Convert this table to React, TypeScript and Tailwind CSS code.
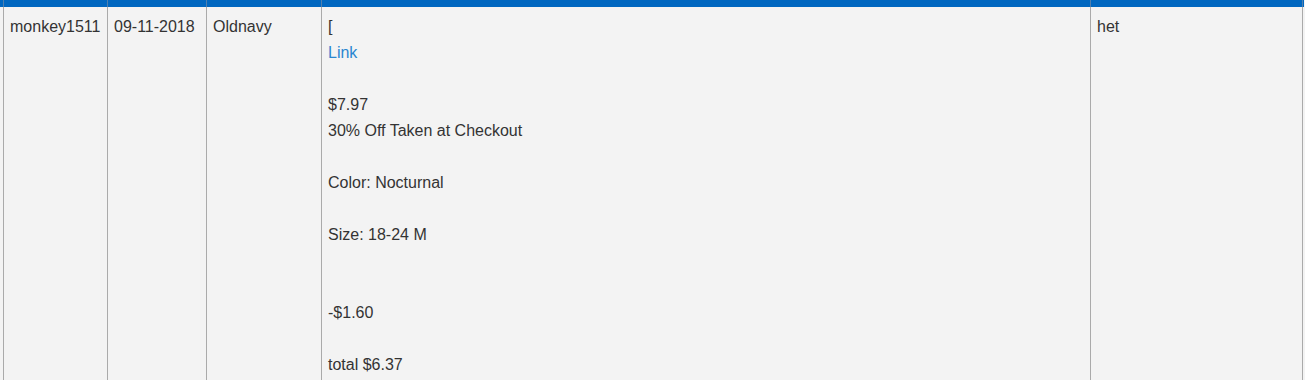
import React from 'react';

const cols = ['w-[104px]', 'w-[99px]', 'w-[115px]', 'w-[769px]', 'w-[213px]'];

export default function App() {
  return (
    <div
      className="w-[1305px] h-[380px] overflow-hidden bg-[#f3f3f3] text-[16px] leading-[26px] text-[#333]"
      style={{ fontFamily: '"Liberation Sans", Arial, sans-serif' }}
    >
      {/* Header strip */}
      <div className="flex h-[7px] w-[1304px] bg-[#0067c0] pl-[3px]">
        {cols.map((c, i) => (
          <div
            key={i}
            className={`${c} h-full border-l border-[#4f7fae] ${i === cols.length - 1 ? 'border-r' : ''}`}
          />
        ))}
      </div>

      {/* Order row */}
      <div className="flex pl-[3px] h-[373px]">
        <div className="w-[104px] border-l border-[#aaa] px-[6px] pt-[7px] whitespace-nowrap">monkey1511</div>
        <div className="w-[99px] border-l border-[#aaa] px-[6px] pt-[7px] whitespace-nowrap">09-11-2018</div>
        <div className="w-[115px] border-l border-[#aaa] px-[6px] pt-[7px]">Oldnavy</div>
        <div className="w-[769px] border-l border-[#aaa] px-[6px] pt-[7px]">
          <div>[</div>
          <div>
            <a href="#" className="text-[#2a86d0]">Link</a>
          </div>
          <div>&nbsp;</div>
          <div>$7.97</div>
          <div>30% Off Taken at Checkout</div>
          <div>&nbsp;</div>
          <div>Color: Nocturnal</div>
          <div>&nbsp;</div>
          <div>Size: 18-24 M</div>
          <div>&nbsp;</div>
          <div>&nbsp;</div>
          <div>-$1.60</div>
          <div>&nbsp;</div>
          <div>total $6.37</div>
        </div>
        <div className="w-[213px] border-l border-r border-[#aaa] px-[6px] pt-[7px]">het</div>
      </div>
    </div>
  );
}
